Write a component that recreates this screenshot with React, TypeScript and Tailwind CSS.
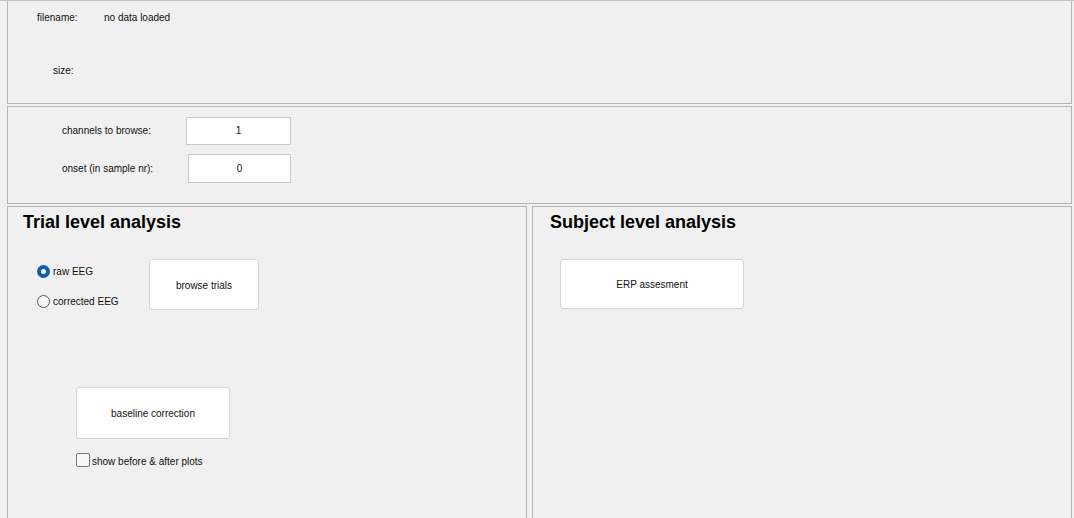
import React from "react";

const font = { fontFamily: '"Liberation Sans", Arial, sans-serif' };

function Radio({ checked, label }: { checked: boolean; label: string }) {
  return (
    <div className="flex items-center h-[14px]">
      {checked ? (
        <div className="w-[13px] h-[13px] rounded-full bg-[#0a5fb4] flex items-center justify-center">
          <div className="w-[5px] h-[5px] rounded-full bg-white" />
        </div>
      ) : (
        <div className="w-[13px] h-[13px] rounded-full border border-[#5c5c5c] bg-[#f7f7f7]" />
      )}
      <span className="ml-[3px] mt-[1px] text-[10px] leading-[12px] text-[#111]">{label}</span>
    </div>
  );
}

function Btn({ label, cls }: { label: string; cls: string }) {
  return (
    <div
      className={`shrink-0 bg-white border border-[#d6d6d6] rounded-[3px] flex items-center justify-center text-[10px] leading-[12px] text-[#111] ${cls}`}
    >
      <span className="mt-[2px]">{label}</span>
    </div>
  );
}

export default function App() {
  return (
    <div
      style={font}
      className="w-[1074px] h-[518px] overflow-hidden bg-[#f0f0f0] border-t border-[#c4c4c4] pl-[7px] pr-[2px] flex flex-col"
    >
      {/* Panel 1 */}
      <div className="shrink-0 h-[103px] border border-t-0 border-[#b4b4b4] flex flex-col pt-[11px] text-[10px] leading-[12px] text-[#111]">
        <div className="flex h-[12px]">
          <span className="ml-[29px] w-[67px]">filename:</span>
          <span>no data loaded</span>
        </div>
        <div className="flex h-[12px] mt-[41px]">
          <span className="ml-[45px]">size:</span>
        </div>
      </div>

      {/* Panel 2 */}
      <div className="shrink-0 mt-[2px] h-[98px] border border-[#b4b4b4] flex flex-col pt-[10px] text-[10px] leading-[12px] text-[#111]">
        <div className="flex items-center h-[28px]">
          <span className="ml-[54px] w-[124px]">channels to browse:</span>
          <div className="w-[105px] h-[28px] bg-white border border-[#c9c9c9] flex items-center justify-center">
            1
          </div>
        </div>
        <div className="flex items-center h-[29px] mt-[9px]">
          <span className="ml-[54px] w-[126px] mt-[1px]">onset (in sample nr):</span>
          <div className="w-[103px] h-[29px] bg-white border border-[#c9c9c9] flex items-center justify-center">
            0
          </div>
        </div>
      </div>

      {/* Bottom panels */}
      <div className="shrink-0 mt-[2px] flex gap-[5px] h-[330px]">
        <div className="w-[520px] h-full border border-[#b4b4b4] flex flex-col">
          <div className="ml-[15px] mt-[5px] text-[18px] leading-[20px] font-bold text-black">
            Trial level analysis
          </div>
          <div className="flex mt-[27px]">
            <div className="ml-[29px] w-[112px] pt-[5px] flex flex-col gap-[16px]">
              <Radio checked label="raw EEG" />
              <Radio checked={false} label="corrected EEG" />
            </div>
            <Btn label="browse trials" cls="w-[110px] h-[51px]" />
          </div>
          <Btn label="baseline correction" cls="ml-[68px] mt-[77px] w-[154px] h-[52px]" />
          <div className="flex items-center ml-[68px] mt-[14px] h-[14px]">
            <div className="w-[14px] h-[14px] rounded-[2px] border border-[#7a7a7a] bg-[#f8f8f8]" />
            <span className="ml-[2px] mt-[3px] text-[10px] leading-[12px] text-[#111]">
              show before &amp; after plots
            </span>
          </div>
        </div>
        <div className="w-[540px] h-full border border-[#b4b4b4] flex flex-col">
          <div className="ml-[17px] mt-[5px] text-[18px] leading-[20px] font-bold text-black">
            Subject level analysis
          </div>
          <Btn label="ERP assesment" cls="ml-[27px] mt-[27px] w-[184px] h-[50px]" />
        </div>
      </div>
    </div>
  );
}
